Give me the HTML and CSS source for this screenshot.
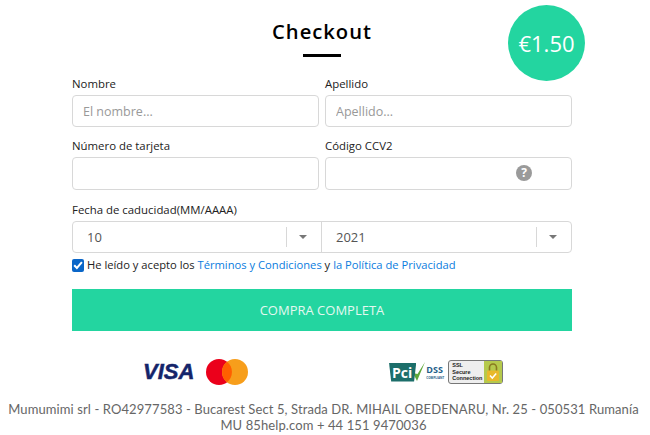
FILE: index.html
```html
<!DOCTYPE html>
<html lang="es">

<head>
    <meta charset="UTF-8">
    <meta name="viewport" content="width=device-width, initial-scale=1.0">
    <title>Checkout</title>
    <link rel="stylesheet" href="styles.css">
</head>

<body>
    <div class="price-badge">€1.50</div>

    <div class="checkout">
        <h2>Checkout</h2>
        <div class="title-line"></div>

        <form class="form-grid">
            <!-- Name -->
            <div class="field">
                <label for="first_name">Nombre</label>
                <input type="text" id="first_name" placeholder="El nombre...">
            </div>
            <div class="field">
                <label for="last_name">Apellido</label>
                <input type="text" id="last_name" placeholder="Apellido...">
            </div>

            <!-- Card -->
            <div class="field field-card">
                <label for="card">Número de tarjeta</label>
                <input type="text" id="card">
            </div>
            <div class="field field-card">
                <label for="ccv">Código CCV2</label>
                <div class="input-wrap">
                    <input type="text" id="ccv">
                    <span class="help-icon">?</span>
                </div>
            </div>

            <!-- Expiry -->
            <div class="field field-wide">
                <label>Fecha de caducidad(MM/AAAA)</label>
                <div class="select-group">
                    <div class="select-box">
                        <span class="select-value">10</span>
                        <span class="select-arrow"></span>
                    </div>
                    <div class="select-box">
                        <span class="select-value">2021</span>
                        <span class="select-arrow"></span>
                    </div>
                </div>
            </div>

            <div class="terms field-wide">
                <span class="check">
                    <svg viewBox="0 0 12 12" width="12" height="12">
                        <path d="M2.2 6.2 L4.9 9 L9.9 3.2" fill="none" stroke="#fff" stroke-width="2"></path>
                    </svg>
                </span>
                <span>He leído y acepto los <a href="#">Términos y Condiciones</a> y <a href="#">la Política de Privacidad</a></span>
            </div>

            <button type="button" class="buy field-wide">COMPRA COMPLETA</button>
        </form>

        <div class="logos">
            <div class="logo-set">
                <span class="visa">VISA</span>
                <svg class="mastercard" viewBox="0 0 42 26" width="42" height="26">
                    <circle cx="13" cy="13" r="13" fill="#eb001b"></circle>
                    <circle cx="29" cy="13" r="13" fill="#f79e1b"></circle>
                    <path d="M21 2.8 A13 13 0 0 1 21 23.2 A13 13 0 0 1 21 2.8 Z" fill="#ff5f00"></path>
                </svg>
            </div>
            <div class="logo-set logo-set-secure">
                <div class="pci">
                    <span class="pci-mark">Pci</span>
                    <svg class="pci-tick" viewBox="0 0 14 24" width="14" height="24">
                        <path d="M1 13 L5 21 L13 2 L5.5 14 Z" fill="#5fa83a"></path>
                    </svg>
                    <div class="pci-dss">
                        <span>DSS</span>
                        <small>COMPLIANT</small>
                    </div>
                </div>
                <div class="ssl">
                    <div class="ssl-text">SSL<br>Secure<br>Connection</div>
                    <div class="ssl-lock">
                        <svg viewBox="0 0 14 20" width="14" height="20">
                            <path d="M3.5 9 V5.5 A3.5 3.5 0 0 1 10.5 5.5 V9" fill="none" stroke="#8a7a20" stroke-width="1.6"></path>
                            <rect x="1" y="8.5" width="12" height="10.5" rx="1" fill="#e8b92a"></rect>
                            <path d="M4 13.5 L6.3 16 L10.2 11.5" fill="none" stroke="#fff" stroke-width="1.5"></path>
                        </svg>
                    </div>
                </div>
            </div>
        </div>
    </div>

    <div class="footer">
        Mumumimi srl - RO42977583 - Bucarest Sect 5, Strada DR. MIHAIL OBEDENARU, Nr. 25 - 050531 Rumanía<br>
        MU 85help.com + 44 151 9470036
    </div>
</body>

</html>
```

FILE: styles.css
```css
body {
    margin: 0;
    font-family: "Open Sans", Arial, sans-serif;
    background-color: white;
    color: #222;
    overflow: hidden;
}

.price-badge {
    position: absolute;
    left: 508px;
    top: 5px;
    width: 77px;
    height: 76px;
    border-radius: 50%;
    background: #23d5a0;
    color: white;
    font-size: 22px;
    line-height: 76px;
    text-align: center;
}

.checkout {
    width: 500px;
    margin: 0 auto;
    padding-top: 18px;
    transform: translateX(-3px);
}

.checkout h2 {
    margin: 0;
    font-size: 20.2px;
    line-height: 27px;
    font-weight: 600;
    letter-spacing: 1px;
    color: black;
    text-align: center;
}

.title-line {
    width: 38px;
    height: 3px;
    margin: 9px auto 17px;
    background: black;
}

.form-grid {
    display: grid;
    grid-template-columns: 1fr 1fr;
    column-gap: 6px;
}

.field {
    margin-bottom: 9px;
}

.field-wide {
    grid-column: span 2;
}

.field label {
    display: block;
    height: 21px;
    font-size: 11.4px;
    line-height: 20px;
}

.field input {
    display: block;
    box-sizing: border-box;
    width: 100%;
    height: 32px;
    padding: 0 10px;
    border: 1px solid #d8d8d8;
    border-radius: 4px;
    font-family: inherit;
    font-size: 12.5px;
    outline: none;
}

.field-card {
    margin-bottom: 10px;
}

.field-card input {
    height: 33px;
}

.field input::placeholder {
    color: #999;
}

.input-wrap {
    position: relative;
}

.help-icon {
    position: absolute;
    right: 40px;
    top: 8px;
    width: 16px;
    height: 16px;
    border-radius: 50%;
    background: #9a9a9a;
    color: white;
    font-size: 12px;
    font-weight: 700;
    line-height: 16px;
    text-align: center;
}

.select-group {
    display: grid;
    grid-template-columns: 248px 1fr;
    height: 32px;
    box-sizing: border-box;
    border: 1px solid #d8d8d8;
    border-radius: 4px;
}

.select-box {
    display: flex;
    align-items: center;
    padding-left: 14px;
    font-size: 13px;
    color: #555;
}

.select-box + .select-box {
    border-left: 1px solid #d8d8d8;
}

.select-value {
    flex: 1;
}

.select-arrow {
    position: relative;
    width: 34px;
    height: 20px;
    border-left: 1px solid #d8d8d8;
}

.select-arrow::after {
    content: "";
    position: absolute;
    left: 12px;
    top: 8px;
    border-left: 4px solid transparent;
    border-right: 4px solid transparent;
    border-top: 4px solid #777;
}

.terms {
    display: flex;
    align-items: center;
    gap: 3px;
    margin-top: -5px;
    font-size: 11.2px;
    line-height: 16px;
}

.terms a {
    color: #0a7cde;
    text-decoration: none;
}

.check {
    display: flex;
    align-items: center;
    justify-content: center;
    width: 12px;
    height: 13px;
    border-radius: 2px;
    background: #0a66c8;
}

.buy {
    height: 42px;
    margin-top: 16px;
    border: none;
    background: #23d5a0;
    color: #e4f8f0;
    font-family: inherit;
    font-size: 13px;
}

.logos {
    display: grid;
    grid-template-columns: 1fr 1fr;
    margin-top: 27px;
}

.logo-set {
    display: flex;
    align-items: center;
    gap: 12px;
    height: 28px;
    padding-left: 71px;
}

.logo-set-secure {
    gap: 4px;
    padding-left: 67px;
}

.visa {
    font-family: "Liberation Sans", Arial, sans-serif;
    font-size: 22px;
    font-style: italic;
    font-weight: 700;
    color: #14246a;
    -webkit-text-stroke: 0.5px #14246a;
}

.pci {
    display: flex;
    align-items: center;
}

.pci-mark {
    padding: 2px 4px 2px 3px;
    background: #1c6e6a;
    color: white;
    font-size: 14px;
    font-weight: 700;
    line-height: 15px;
    clip-path: polygon(0 0, 100% 0, 92% 100%, 8% 100%);
}

.pci-tick {
    margin-left: -4px;
}

.pci-dss {
    display: flex;
    flex-direction: column;
    color: #1f5f8a;
    font-size: 9px;
    font-weight: 700;
    line-height: 12px;
}

.pci-dss small {
    font-size: 3px;
    line-height: 4px;
}

.ssl {
    display: flex;
    box-sizing: border-box;
    width: 55px;
    height: 24px;
    border: 1px solid #777;
    border-radius: 3px;
    background: #eee;
}

.ssl-text {
    flex: 1;
    padding: 1px 0 0 3px;
    font-family: "Liberation Sans", Arial, sans-serif;
    font-size: 5.5px;
    font-weight: 700;
    line-height: 6.5px;
}

.ssl-lock {
    display: flex;
    align-items: center;
    justify-content: center;
    width: 18px;
    background: #b5c94c;
}

.footer {
    margin-top: 15px;
    padding-right: 3px;
    font-family: "Lato", Arial, sans-serif;
    font-size: 13px;
    line-height: 16px;
    letter-spacing: 0.1px;
    color: #666;
    text-align: center;
    white-space: nowrap;
}
```
